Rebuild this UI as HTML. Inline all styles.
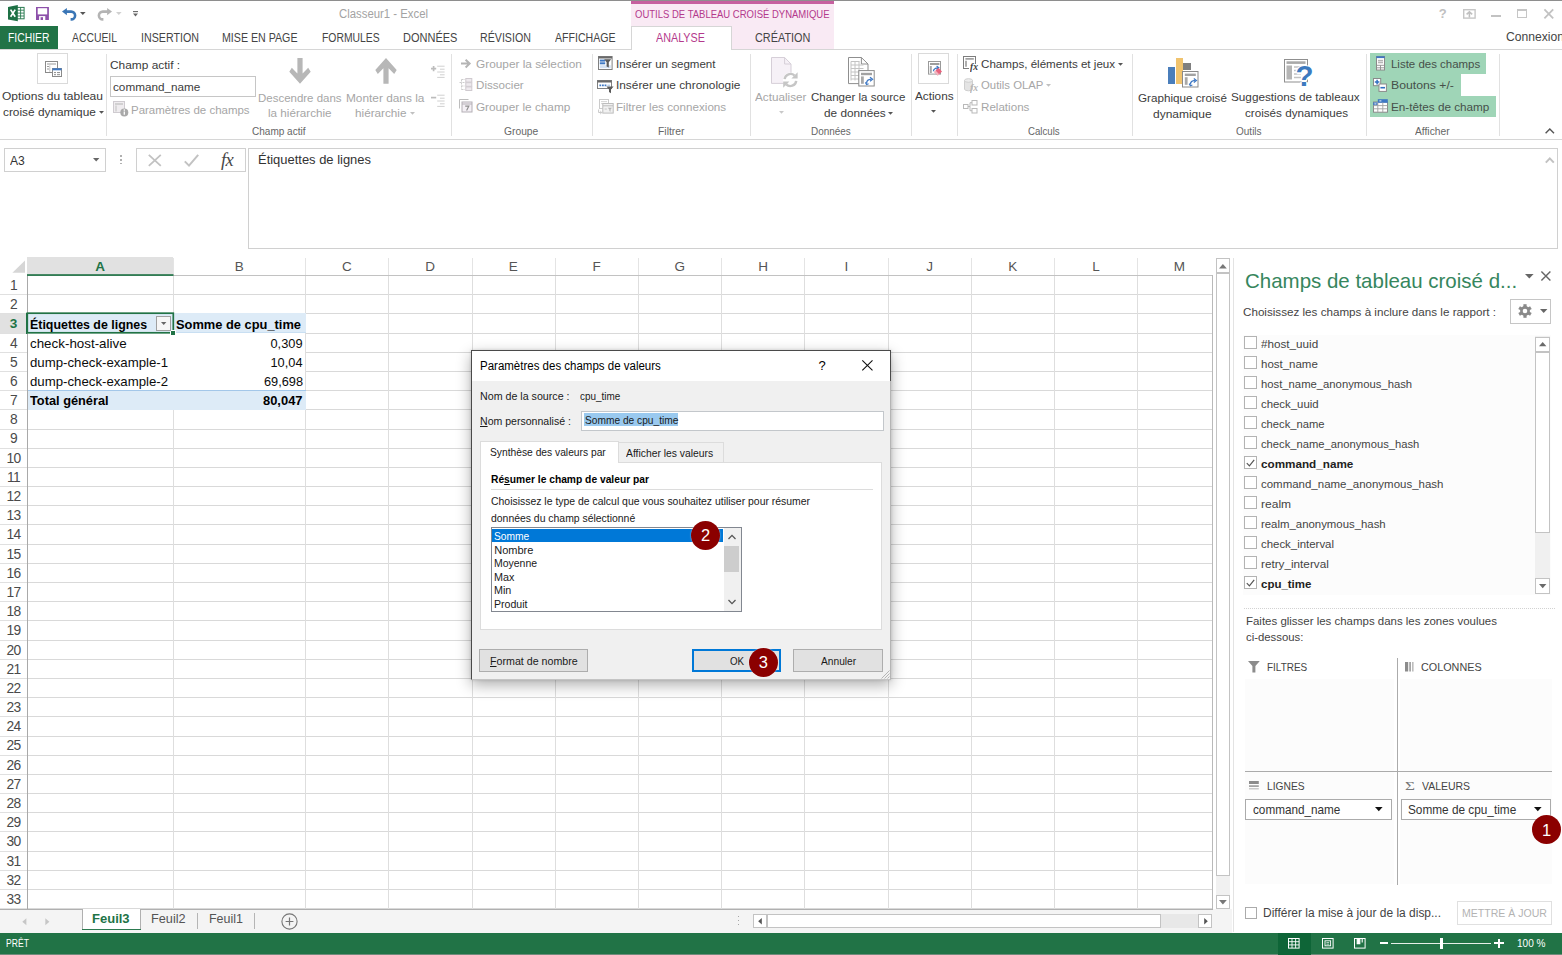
<!DOCTYPE html>
<html lang="fr"><head><meta charset="utf-8"><title>Classeur1 - Excel</title>
<style>
html,body{margin:0;padding:0;}
html{width:1562px;height:955px;overflow:hidden;}
body{width:1562px;height:955px;overflow:hidden;background:#fff;position:relative;font-family:"Liberation Sans",sans-serif;}
.a{position:absolute;box-sizing:border-box;}
.t{white-space:nowrap;}
svg{overflow:visible;}
</style></head>
<body>
<div class="a" style="left:0.00px;top:0.00px;width:1562.00px;height:1.00px;background:#8e8e8e;"></div>
<div class="a" style="left:631.00px;top:1.00px;width:202.50px;height:48.50px;background:#f9eaf4;"></div>
<div class="a" style="left:631.00px;top:1.00px;width:202.50px;height:3.00px;background:#c6609f;"></div>
<span class="a t" style="top:7px;font-size:10.5px;line-height:14px;color:#b4398c;left:635.00px;transform:scaleX(0.9050);transform-origin:0 50%;"><span>OUTILS DE TABLEAU CROISÉ DYNAMIQUE</span></span>
<span class="a t" style="top:6px;font-size:12px;line-height:16px;color:#a3a3a3;left:339.00px;transform:scaleX(0.9465);transform-origin:0 50%;"><span>Classeur1 - Excel</span></span>
<svg class="a" style="left:7.70px;top:5.30px;" width="17" height="17" viewBox="0 0 17 17"><rect x="8.5" y="2.4" width="7.6" height="11.4" fill="#fff" stroke="#2a7b50" stroke-width="1"/>
<path d="M9 5.2h7M9 8.1h7M9 11h7M12.6 2.4v11.4" stroke="#2a7b50" stroke-width="0.9"/>
<path d="M0 1.9 L9.8 0 V16.3 L0 14.4 Z" fill="#1e7145"/>
<path d="M2.6 4.6 L7.2 11.8 M7.2 4.6 L2.6 11.8" stroke="#fff" stroke-width="1.7"/></svg>
<svg class="a" style="left:35.80px;top:7.00px;" width="13" height="13" viewBox="0 0 13 13"><path d="M0 0H12.9V13H0Z" fill="#8d50aa"/><rect x="1.7" y="1.2" width="9.5" height="6.2" fill="#fff"/>
<rect x="3.1" y="9.1" width="6.2" height="3.9" fill="#fff"/><rect x="4.6" y="10.2" width="2.4" height="2.8" fill="#8d50aa"/></svg>
<svg class="a" style="left:61.50px;top:7.90px;" width="15" height="13" viewBox="0 0 15 13"><path d="M4 3.6 H9.2 A3.9 3.9 0 0 1 9.2 11.4 H8.6" fill="none" stroke="#3a76b6" stroke-width="2.6"/>
<path d="M0 3.6 L4.9 0 V7.3 Z" fill="#3a76b6"/></svg>
<svg class="a" style="left:80.20px;top:12.00px;" width="6" height="3" viewBox="0 0 6 3"><path d="M0 0H5.6L2.8 2.9Z" fill="#555"/></svg>
<svg class="a" style="left:97.00px;top:7.90px;" width="15" height="13" viewBox="0 0 15 13"><path d="M11 3.6 H5.8 A3.9 3.9 0 0 0 5.8 11.4 H6.4" fill="none" stroke="#b4b4b4" stroke-width="2.6"/>
<path d="M15 3.6 L10.1 0 V7.3 Z" fill="#b4b4b4"/></svg>
<svg class="a" style="left:116.40px;top:12.00px;" width="6" height="3" viewBox="0 0 6 3"><path d="M0 0H5.6L2.8 2.9Z" fill="#d0d0d0"/></svg>
<svg class="a" style="left:133.00px;top:11.40px;" width="6" height="6" viewBox="0 0 6 6"><path d="M0 0.6H5" stroke="#666" stroke-width="1.1"/><path d="M0 2.5H5L2.5 5.4Z" fill="#666"/></svg>
<span class="a t" style="top:5px;font-size:13px;line-height:17px;color:#c0c0c0;left:1442.70px;transform:translateX(-50%);font-weight:700;"><span>?</span></span>
<svg class="a" style="left:1463.00px;top:8.80px;" width="13" height="10" viewBox="0 0 13 10"><rect x="0.7" y="0.7" width="11.4" height="8.4" fill="none" stroke="#c6c6c6" stroke-width="1.4"/>
<path d="M6.4 8.4V3M3.6 5.4L6.4 2.8L9.2 5.4" fill="none" stroke="#c0c0c0" stroke-width="1.6"/></svg>
<div class="a" style="left:1491.00px;top:14.80px;width:9.80px;height:2.00px;background:#c2c2c2;"></div>
<div class="a" style="left:1517.20px;top:8.90px;width:9.80px;height:9.60px;border:1.4px solid #c6c6c6;border-top-width:2.6px;"></div>
<svg class="a" style="left:1544.00px;top:8.90px;" width="10" height="10" viewBox="0 0 10 10"><path d="M0.4 0.4L9.2 9.3M9.2 0.4L0.4 9.3" stroke="#c2c2c2" stroke-width="1.8"/></svg>
<div class="a" style="left:0.00px;top:26.00px;width:58.00px;height:24.00px;background:#217346;"></div>
<span class="a t" style="top:30px;font-size:12.5px;line-height:16px;color:#fff;left:7.70px;transform:scaleX(0.8300);transform-origin:0 50%;"><span>FICHIER</span></span>
<span class="a t" style="top:30px;font-size:12.5px;line-height:16px;color:#444444;left:72.00px;transform:scaleX(0.8304);transform-origin:0 50%;"><span>ACCUEIL</span></span>
<span class="a t" style="top:30px;font-size:12.5px;line-height:16px;color:#444444;left:140.60px;transform:scaleX(0.8534);transform-origin:0 50%;"><span>INSERTION</span></span>
<span class="a t" style="top:30px;font-size:12.5px;line-height:16px;color:#444444;left:222.30px;transform:scaleX(0.8513);transform-origin:0 50%;"><span>MISE EN PAGE</span></span>
<span class="a t" style="top:30px;font-size:12.5px;line-height:16px;color:#444444;left:321.60px;transform:scaleX(0.8308);transform-origin:0 50%;"><span>FORMULES</span></span>
<span class="a t" style="top:30px;font-size:12.5px;line-height:16px;color:#444444;left:403.00px;transform:scaleX(0.8799);transform-origin:0 50%;"><span>DONNÉES</span></span>
<span class="a t" style="top:30px;font-size:12.5px;line-height:16px;color:#444444;left:480.40px;transform:scaleX(0.8519);transform-origin:0 50%;"><span>RÉVISION</span></span>
<span class="a t" style="top:30px;font-size:12.5px;line-height:16px;color:#444444;left:555.20px;transform:scaleX(0.8470);transform-origin:0 50%;"><span>AFFICHAGE</span></span>
<div class="a" style="left:0.00px;top:49.00px;width:1562.00px;height:1.00px;background:#d6d6d6;"></div>
<div class="a" style="left:630.50px;top:26.20px;width:101.50px;height:24.00px;background:#fff;border:1px solid #d6d6d6;border-bottom:none;"></div>
<span class="a t" style="top:30px;font-size:12.5px;line-height:16px;color:#b4398c;left:655.60px;transform:scaleX(0.8617);transform-origin:0 50%;"><span>ANALYSE</span></span>
<span class="a t" style="top:30px;font-size:12.5px;line-height:16px;color:#444444;left:755.40px;transform:scaleX(0.8701);transform-origin:0 50%;"><span>CRÉATION</span></span>
<div class="a" style="left:1500px;top:26px;width:62px;height:23px;overflow:hidden;"><span class="a t" style="top:3px;font-size:12.5px;line-height:16px;color:#444444;left:6.40px;transform:scaleX(0.9705);transform-origin:0 50%;"><span>Connexion</span></span></div>
<div class="a" style="left:0.00px;top:139.00px;width:1562.00px;height:1.00px;background:#d6d6d6;"></div>
<div class="a" style="left:106.20px;top:54.00px;width:1.00px;height:81.50px;background:#e1e1e1;"></div>
<div class="a" style="left:451.20px;top:54.00px;width:1.00px;height:81.50px;background:#e1e1e1;"></div>
<div class="a" style="left:591.70px;top:54.00px;width:1.00px;height:81.50px;background:#e1e1e1;"></div>
<div class="a" style="left:749.90px;top:54.00px;width:1.00px;height:81.50px;background:#e1e1e1;"></div>
<div class="a" style="left:911.40px;top:54.00px;width:1.00px;height:81.50px;background:#e1e1e1;"></div>
<div class="a" style="left:956.70px;top:54.00px;width:1.00px;height:81.50px;background:#e1e1e1;"></div>
<div class="a" style="left:1132.40px;top:54.00px;width:1.00px;height:81.50px;background:#e1e1e1;"></div>
<div class="a" style="left:1366.30px;top:54.00px;width:1.00px;height:81.50px;background:#e1e1e1;"></div>
<div class="a" style="left:1499.00px;top:54.00px;width:1.00px;height:81.50px;background:#e1e1e1;"></div>
<div class="a" style="left:37.40px;top:53.30px;width:30.40px;height:30.40px;background:#fff;border:1px solid #dadada;"></div>
<svg class="a" style="left:45.00px;top:61.00px;" width="17" height="16" viewBox="0 0 17 16"><rect x="0.5" y="0.5" width="12" height="11" fill="#fff" stroke="#8a8a8a"/>
<path d="M2 3h9M2 5.5h2M2 8h2" stroke="#9a9a9a" stroke-width="1.2"/><path d="M4.8 4.4v6.4" stroke="#b5b5b5" stroke-width="0.8"/>
<rect x="7.5" y="7.5" width="9" height="8" fill="#fff" stroke="#8a8a8a"/><rect x="7.5" y="7.3" width="9" height="2" fill="#3e78c4"/>
<path d="M9 11.6h2M12 11.6h3M9 13.7h2M12 13.7h3" stroke="#8a8a8a" stroke-width="1"/></svg>
<span class="a t" style="top:88px;font-size:11.8px;line-height:16px;color:#3a3a3a;left:2.30px;transform:scaleX(1.0197);transform-origin:0 50%;"><span>Options du tableau</span></span>
<span class="a t" style="top:104px;font-size:11.8px;line-height:16px;color:#3a3a3a;left:2.50px;transform:scaleX(1.0047);transform-origin:0 50%;"><span>croisé dynamique</span></span>
<svg class="a" style="left:98.60px;top:110.60px;" width="6" height="4" viewBox="0 0 6 4"><path d="M0 0H5L2.5 2.8Z" fill="#555"/></svg>
<span class="a t" style="top:57px;font-size:11.8px;line-height:16px;color:#3a3a3a;left:110.00px;transform:scaleX(1.0086);transform-origin:0 50%;"><span>Champ actif :</span></span>
<div class="a" style="left:110.00px;top:76.00px;width:146.00px;height:21.40px;background:#fff;border:1px solid #c6c6c6;"></div>
<span class="a t" style="top:79px;font-size:11.8px;line-height:16px;color:#3c3c3c;left:112.90px;transform:scaleX(0.9946);transform-origin:0 50%;"><span>command_name</span></span>
<svg class="a" style="left:113.00px;top:100.50px;" width="16" height="16" viewBox="0 0 16 16"><rect x="0.5" y="0.5" width="11" height="11" fill="#efecef" stroke="#cfcbd0"/>
<path d="M2 3h8" stroke="#c4c4c4" stroke-width="1.4"/><path d="M3 4.5v6" stroke="#cdcdcd" stroke-width="1.4"/>
<circle cx="11.3" cy="11.5" r="4" fill="#a9a9a9"/><path d="M11.3 10.6v3.2" stroke="#fff" stroke-width="1.3"/><circle cx="11.3" cy="9.1" r="0.8" fill="#fff"/></svg>
<span class="a t" style="top:102px;font-size:11.8px;line-height:16px;color:#a6a6a6;left:131.40px;transform:scaleX(0.9724);transform-origin:0 50%;"><span>Paramètres de champs</span></span>
<svg class="a" style="left:288.80px;top:58.00px;" width="22" height="26" viewBox="0 0 22 26"><path d="M8.4 0H13.6V15.5L19.2 9.7L21.7 13.8L11 25.8L0.3 13.8L2.8 9.7L8.4 15.5Z" fill="#b7b7b7"/></svg>
<svg class="a" style="left:374.50px;top:58.00px;" width="22" height="26" viewBox="0 0 22 26"><path d="M8.4 25.8H13.6V10.3L19.2 16.1L21.7 12L11 0L0.3 12L2.8 16.1L8.4 10.3Z" fill="#b7b7b7"/></svg>
<span class="a t" style="top:90px;font-size:11.8px;line-height:16px;color:#a6a6a6;left:257.80px;transform:scaleX(0.9730);transform-origin:0 50%;"><span>Descendre dans</span></span>
<span class="a t" style="top:105px;font-size:11.8px;line-height:16px;color:#a6a6a6;left:267.50px;transform:scaleX(0.9896);transform-origin:0 50%;"><span>la hiérarchie</span></span>
<span class="a t" style="top:90px;font-size:11.8px;line-height:16px;color:#a6a6a6;left:345.90px;transform:scaleX(1.0045);transform-origin:0 50%;"><span>Monter dans la</span></span>
<span class="a t" style="top:105px;font-size:11.8px;line-height:16px;color:#a6a6a6;left:355.30px;transform:scaleX(0.9940);transform-origin:0 50%;"><span>hiérarchie</span></span>
<svg class="a" style="left:410.00px;top:112.20px;" width="6" height="4" viewBox="0 0 6 4"><path d="M0 0H5L2.5 2.8Z" fill="#c0c0c0"/></svg>
<svg class="a" style="left:431.00px;top:64.60px;" width="14" height="13" viewBox="0 0 14 13"><path d="M0 3.6h5.2M2.6 1v5.2" stroke="#bcbcbc" stroke-width="1.7"/><path d="M6.2 1.2h7.4M9 4.2h4.6M6.2 7h7.4M9 9.8h4.6M6.2 12.4h7.4" stroke="#d0d0d0" stroke-width="1"/></svg>
<svg class="a" style="left:431.00px;top:94.40px;" width="14" height="13" viewBox="0 0 14 13"><path d="M0 3.6h5.2" stroke="#bcbcbc" stroke-width="1.7"/><path d="M6.2 1.2h7.4M9 4.2h4.6M6.2 7h7.4M9 9.8h4.6M6.2 12.4h7.4" stroke="#d0d0d0" stroke-width="1"/></svg>
<span class="a t" style="top:124px;font-size:10.8px;line-height:14px;color:#666;left:251.80px;transform:scaleX(0.9287);transform-origin:0 50%;"><span>Champ actif</span></span>
<svg class="a" style="left:460.60px;top:59.00px;" width="10" height="10" viewBox="0 0 10 10"><path d="M0 4.6H7M4.6 0.8L8.6 4.6L4.6 8.4" fill="none" stroke="#b4b4b4" stroke-width="2"/></svg>
<span class="a t" style="top:56px;font-size:11.8px;line-height:16px;color:#a6a6a6;left:475.90px;transform:scaleX(1.0030);transform-origin:0 50%;"><span>Grouper la sélection</span></span>
<svg class="a" style="left:458.80px;top:78.00px;" width="14" height="13" viewBox="0 0 14 13"><path d="M2.5 1.5h3.5M0.5 4.5h5.5M2.5 8h3.5M2.5 11.5h3.5M2.5 1.5v10" fill="none" stroke="#cdcdcd" stroke-dasharray="2 1"/>
<rect x="6.8" y="0.5" width="6" height="3.6" fill="#eeeaee" stroke="#cfcacf"/><rect x="6.8" y="4.7" width="6" height="3.6" fill="#eeeaee" stroke="#cfcacf"/><rect x="6.8" y="8.9" width="6" height="3.6" fill="#eeeaee" stroke="#cfcacf"/></svg>
<span class="a t" style="top:77px;font-size:11.8px;line-height:16px;color:#a6a6a6;left:475.90px;transform:scaleX(0.9832);transform-origin:0 50%;"><span>Dissocier</span></span>
<svg class="a" style="left:458.80px;top:99.00px;" width="14" height="14" viewBox="0 0 14 14"><path d="M0.5 9.5V0.5H9.5" fill="none" stroke="#bdbdbd"/><rect x="3" y="3" width="10" height="10" fill="#f4f0f5" stroke="#b4afb5"/><path d="M3 5h10" stroke="#b4afb5"/>
<path d="M6.2 7.2h3.6L7.6 11.6" fill="none" stroke="#8f8f8f" stroke-width="1.2"/></svg>
<span class="a t" style="top:99px;font-size:11.8px;line-height:16px;color:#a6a6a6;left:475.90px;"><span>Grouper le champ</span></span>
<span class="a t" style="top:124px;font-size:10.8px;line-height:14px;color:#666;left:504.30px;transform:scaleX(0.9524);transform-origin:0 50%;"><span>Groupe</span></span>
<svg class="a" style="left:598.20px;top:56.00px;" width="15" height="14" viewBox="0 0 15 14"><rect x="0.5" y="0.5" width="13.6" height="13" fill="#fff" stroke="#808080"/><rect x="0.5" y="0.5" width="13.6" height="2" fill="#6a6a6a"/>
<rect x="1.8" y="9.2" width="11" height="3" fill="#d3e2f4"/>
<rect x="1.8" y="3.6" width="5.4" height="2" fill="#3e78c4"/><rect x="1.8" y="6.3" width="5.4" height="2" fill="#3e78c4"/>
<path d="M6.2 3.2H13.2L10.8 6.2V11.6L8.6 10.4V6.2Z" fill="#5a5a5a"/></svg>
<span class="a t" style="top:56px;font-size:11.8px;line-height:16px;color:#3c3c3c;left:616.00px;transform:scaleX(0.9789);transform-origin:0 50%;"><span>Insérer un segment</span></span>
<svg class="a" style="left:597.00px;top:80.00px;" width="17" height="14" viewBox="0 0 17 14"><rect x="0.5" y="0.5" width="14" height="8" fill="#fff" stroke="#808080"/><rect x="0.5" y="0.5" width="14" height="2" fill="#6a6a6a"/>
<path d="M2.4 5.4h1.8M5 5.4h1.8M7.6 5.4h1.8" stroke="#3e78c4" stroke-width="1.6"/><path d="M10.4 5.4h2.6" stroke="#b9cfea" stroke-width="1.6"/>
<path d="M9.4 6.4H16.6L14 9.4V13.2L12 12V9.4Z" fill="#5a5a5a"/></svg>
<span class="a t" style="top:77px;font-size:11.8px;line-height:16px;color:#3c3c3c;left:616.00px;transform:scaleX(1.0036);transform-origin:0 50%;"><span>Insérer une chronologie</span></span>
<svg class="a" style="left:597.50px;top:99.00px;" width="16" height="16" viewBox="0 0 16 16"><rect x="1.5" y="0.5" width="9" height="9" fill="#fff" stroke="#cbcbcb"/><path d="M3 2.6h6M3 4.6h6" stroke="#d6d6d6"/>
<rect x="4.8" y="4.5" width="10.4" height="9.6" fill="#f1f1f1" stroke="#bdbdbd"/><path d="M5 6.8h10" stroke="#bdbdbd"/>
<path d="M6.6 10h2.2" stroke="#c4c4c4"/><path d="M9.8 8.8H14L12.5 10.6v2.2l-1.1-.7v-1.5Z" fill="#b5b5b5"/><path d="M0.6 10.5v3h3M2.2 12l1.6 1.5-1.6 1.5" fill="none" stroke="#c8c8c8"/></svg>
<span class="a t" style="top:99px;font-size:11.8px;line-height:16px;color:#a6a6a6;left:616.00px;transform:scaleX(0.9886);transform-origin:0 50%;"><span>Filtrer les connexions</span></span>
<span class="a t" style="top:124px;font-size:10.8px;line-height:14px;color:#666;left:657.50px;transform:scaleX(0.9604);transform-origin:0 50%;"><span>Filtrer</span></span>
<svg class="a" style="left:770.80px;top:56.70px;" width="28" height="31" viewBox="0 0 28 31"><path d="M0.5 0.5H13.6L20 7V26.4H0.5Z" fill="#f6f1f7" stroke="#d6cfd8"/><path d="M13.6 0.5V7H20" fill="none" stroke="#d6cfd8"/>
<circle cx="19.4" cy="23" r="7.6" fill="#fff"/>
<path d="M13.6 22.2A5.9 5.9 0 0 1 23.6 18.6" fill="none" stroke="#c6c6c6" stroke-width="2.4"/><path d="M26.6 15.2V21.4H20.4Z" fill="#c6c6c6"/>
<path d="M25.2 23.8A5.9 5.9 0 0 1 15.2 27.4" fill="none" stroke="#c6c6c6" stroke-width="2.4"/><path d="M12.2 30.8V24.6H18.4Z" fill="#c6c6c6"/></svg>
<span class="a t" style="top:89px;font-size:11.8px;line-height:16px;color:#a6a6a6;left:755.30px;transform:scaleX(0.9923);transform-origin:0 50%;"><span>Actualiser</span></span>
<svg class="a" style="left:778.50px;top:110.80px;" width="6" height="4" viewBox="0 0 6 4"><path d="M0 0H5L2.5 2.8Z" fill="#c8c8c8"/></svg>
<svg class="a" style="left:847.90px;top:57.40px;" width="27" height="30" viewBox="0 0 27 30"><path d="M0.5 0.5H13.4L20 7V26.6H0.5Z" fill="#fff" stroke="#8f8f8f"/><path d="M13.4 0.5V7H20" fill="none" stroke="#8f8f8f"/>
<path d="M3 4.5h8.5M3 8h12.5M3 11.5h12.5M3 15h12.5M3 18.5h12.5M3 22h12.5M3 4.5v19M7 4.5v19M11 4.5v19" stroke="#c4c4c4" stroke-width="1"/>
<rect x="10.8" y="13.6" width="15.4" height="15.4" fill="#fff" stroke="#8a8a8a"/><path d="M13 17h11" stroke="#a2a2a2" stroke-width="2.4"/><path d="M14.4 19.4v7.4" stroke="#a8a8a8" stroke-width="2.8"/>
<path d="M18.6 26.4C18.6 23.6 20 22.4 23.4 22.2" fill="none" stroke="#3e78c4" stroke-width="1.3"/><path d="M22 20.2L24.6 22.2L22 24.2M20.6 26.8L18.6 27.6L17.4 25.4" fill="none" stroke="#3e78c4" stroke-width="1.2"/></svg>
<span class="a t" style="top:89px;font-size:11.8px;line-height:16px;color:#3c3c3c;left:810.70px;transform:scaleX(0.9782);transform-origin:0 50%;"><span>Changer la source</span></span>
<span class="a t" style="top:105px;font-size:11.8px;line-height:16px;color:#3c3c3c;left:824.00px;"><span>de données</span></span>
<svg class="a" style="left:888.40px;top:112.40px;" width="6" height="4" viewBox="0 0 6 4"><path d="M0 0H5L2.5 2.8Z" fill="#555"/></svg>
<span class="a t" style="top:124px;font-size:10.8px;line-height:14px;color:#666;left:810.70px;transform:scaleX(0.9206);transform-origin:0 50%;"><span>Données</span></span>
<div class="a" style="left:918.00px;top:53.40px;width:30.80px;height:30.30px;background:#fff;border:1px solid #dadada;"></div>
<svg class="a" style="left:928.00px;top:61.20px;" width="16" height="16" viewBox="0 0 16 16"><rect x="0.5" y="0.5" width="12" height="12.6" fill="#fff" stroke="#9a9a9a"/><path d="M2 3h9.4" stroke="#9e9e9e" stroke-width="2"/><path d="M2.8 5v7" stroke="#a8a8a8" stroke-width="2"/>
<path d="M5.4 10.2C5.6 8 7 7 10 6.8M8.6 5L10.8 6.8L8.6 8.6" fill="none" stroke="#3e78c4" stroke-width="1.2"/>
<path d="M6.2 11L10.4 6.8L14 10.4L9.8 14.6Z" fill="#e8637d"/><path d="M6.2 11L7.6 9.6L11.2 13.2L9.8 14.6Z" fill="#f3b4c0"/></svg>
<span class="a t" style="top:88px;font-size:11.8px;line-height:16px;color:#3c3c3c;left:914.50px;transform:scaleX(0.9977);transform-origin:0 50%;"><span>Actions</span></span>
<svg class="a" style="left:931.40px;top:109.60px;" width="6" height="4" viewBox="0 0 6 4"><path d="M0 0H5L2.5 2.8Z" fill="#555"/></svg>
<svg class="a" style="left:963.00px;top:55.80px;" width="16" height="16" viewBox="0 0 16 16"><rect x="0.5" y="0.5" width="12" height="12" fill="#fff" stroke="#7d7d7d"/><path d="M2.4 2.9h8.4" stroke="#8a8a8a" stroke-width="1.4"/><path d="M3 4.8v6" stroke="#9a9a9a" stroke-width="1.6"/></svg>
<div class="a" style="left:969.00px;top:63.50px;width:9.50px;height:9.00px;background:#fff;"></div>
<span class="a t" style="top:60px;font-size:10.5px;line-height:14px;color:#3c3c3c;left:969.60px;font-weight:700;font-family:'Liberation Serif', serif;font-style:italic;transform:scaleX(0.9143);transform-origin:0 50%;"><span>fx</span></span>
<span class="a t" style="top:56px;font-size:11.8px;line-height:16px;color:#3c3c3c;left:980.70px;transform:scaleX(0.9832);transform-origin:0 50%;"><span>Champs, éléments et jeux</span></span>
<svg class="a" style="left:1118.00px;top:62.60px;" width="6" height="4" viewBox="0 0 6 4"><path d="M0 0H5L2.5 2.8Z" fill="#555"/></svg>
<svg class="a" style="left:964.00px;top:77.50px;" width="14" height="15" viewBox="0 0 14 15"><path d="M0.5 2.5V11A4 1.8 0 0 0 8.5 11V2.5" fill="#e4e4e4" stroke="#cfcfcf"/><ellipse cx="4.5" cy="2.5" rx="4" ry="1.8" fill="#ededed" stroke="#cfcfcf"/></svg>
<span class="a t" style="top:81px;font-size:10.5px;line-height:14px;color:#b5b5b5;left:970.00px;font-weight:700;font-family:'Liberation Serif', serif;font-style:italic;transform:scaleX(0.9143);transform-origin:0 50%;"><span>fx</span></span>
<span class="a t" style="top:77px;font-size:11.8px;line-height:16px;color:#a6a6a6;left:980.70px;transform:scaleX(0.9614);transform-origin:0 50%;"><span>Outils OLAP</span></span>
<svg class="a" style="left:1046.00px;top:84.00px;" width="6" height="4" viewBox="0 0 6 4"><path d="M0 0H5L2.5 2.8Z" fill="#c0c0c0"/></svg>
<svg class="a" style="left:963.00px;top:99.50px;" width="15" height="14" viewBox="0 0 15 14"><rect x="0.5" y="4.5" width="4.5" height="4" fill="#fff" stroke="#b9b9b9"/><rect x="9" y="0.5" width="5" height="4.5" fill="#fff" stroke="#b9b9b9"/><rect x="9" y="8.5" width="5" height="4.5" fill="#fff" stroke="#b9b9b9"/>
<path d="M5 6.5h2V2.7h2M7 6.5v4.2h2" fill="none" stroke="#b9b9b9"/></svg>
<span class="a t" style="top:99px;font-size:11.8px;line-height:16px;color:#a6a6a6;left:980.70px;transform:scaleX(0.9840);transform-origin:0 50%;"><span>Relations</span></span>
<span class="a t" style="top:124px;font-size:10.8px;line-height:14px;color:#666;left:1027.80px;transform:scaleX(0.8953);transform-origin:0 50%;"><span>Calculs</span></span>
<div class="a" style="left:1167.60px;top:66.60px;width:7.60px;height:17.40px;background:#4a7ebb;"></div>
<div class="a" style="left:1175.50px;top:58.00px;width:7.60px;height:26.00px;background:#f0c36e;"></div>
<div class="a" style="left:1183.40px;top:63.40px;width:7.40px;height:7.00px;background:#7f7f7f;"></div>
<svg class="a" style="left:1182.20px;top:70.80px;" width="16.5" height="16.5" viewBox="0 0 16.5 16.5"><rect x="0.5" y="0.5" width="15.5" height="15.5" fill="#fff" stroke="#8a8a8a"/><path d="M2.8 3.8h11" stroke="#a2a2a2" stroke-width="2.4"/><path d="M4.2 6.2v7.6" stroke="#a8a8a8" stroke-width="2.8"/>
<path d="M8.4 13.6C8.4 10.8 9.8 9.6 13.2 9.4" fill="none" stroke="#3e78c4" stroke-width="1.3"/><path d="M11.8 7.4L14.4 9.4L11.8 11.4M10.4 14L8.4 14.8L7.2 12.6" fill="none" stroke="#3e78c4" stroke-width="1.2"/></svg>
<span class="a t" style="top:90px;font-size:11.8px;line-height:16px;color:#3c3c3c;left:1137.60px;transform:scaleX(0.9895);transform-origin:0 50%;"><span>Graphique croisé</span></span>
<span class="a t" style="top:106px;font-size:11.8px;line-height:16px;color:#3c3c3c;left:1153.00px;transform:scaleX(1.0153);transform-origin:0 50%;"><span>dynamique</span></span>
<svg class="a" style="left:1283.50px;top:59.00px;" width="30" height="29" viewBox="0 0 30 29"><rect x="0.5" y="0.5" width="23" height="22.5" fill="#fff" stroke="#8f8f8f"/><path d="M2.5 3.6h19" stroke="#a9a9a9" stroke-width="2.6"/>
<rect x="2.5" y="6.5" width="5.5" height="14" fill="#b5b5b5"/><path d="M10 8h11.5M10 11.5h8M10 15h7M10 18.5h7" stroke="#c2c2c2" stroke-width="1.6"/></svg>
<span class="a t" style="top:58px;font-size:29.5px;line-height:35px;color:#3d7abf;left:1304.40px;transform:translateX(-50%);font-weight:700;text-shadow:-1.5px 0 #fff,1.5px 0 #fff,0 -1.5px #fff,0 1.5px #fff;"><span>?</span></span>
<span class="a t" style="top:89px;font-size:11.8px;line-height:16px;color:#3c3c3c;left:1231.40px;transform:scaleX(0.9960);transform-origin:0 50%;"><span>Suggestions de tableaux</span></span>
<span class="a t" style="top:105px;font-size:11.8px;line-height:16px;color:#3c3c3c;left:1244.70px;transform:scaleX(0.9879);transform-origin:0 50%;"><span>croisés dynamiques</span></span>
<span class="a t" style="top:124px;font-size:10.8px;line-height:14px;color:#666;left:1236.00px;transform:scaleX(0.9272);transform-origin:0 50%;"><span>Outils</span></span>
<div class="a" style="left:1370.20px;top:53.20px;width:115.80px;height:21.00px;background:#9fd5b7;"></div>
<div class="a" style="left:1370.20px;top:74.00px;width:91.00px;height:22.00px;background:#9fd5b7;"></div>
<div class="a" style="left:1370.20px;top:95.90px;width:126.00px;height:21.20px;background:#9fd5b7;"></div>
<svg class="a" style="left:1375.80px;top:56.00px;" width="10" height="15" viewBox="0 0 10 15"><rect x="0.5" y="0.5" width="8" height="13.5" fill="#fff" stroke="#8a8a8a"/><rect x="0.3" y="0.3" width="8.4" height="1.8" fill="#3e78c4"/>
<rect x="1.8" y="3.4" width="5.4" height="4.6" fill="#e9e9e9"/><path d="M2 4.6h5M2 6.4h5" stroke="#a8a8a8" stroke-width="0.9"/><path d="M0.5 9.3h8M0.5 11.8h8M4.5 9.3v4.7" stroke="#8f8f8f" stroke-width="0.9"/></svg>
<svg class="a" style="left:1373.30px;top:77.60px;" width="15" height="14" viewBox="0 0 15 14"><rect x="0.5" y="0.5" width="7.2" height="7.2" fill="#fff" stroke="#8a8a8a"/><path d="M1.8 4.1h4.6M4.1 1.8v4.6" stroke="#2f6fc0" stroke-width="1.5"/>
<rect x="6" y="6" width="7.4" height="7.4" fill="#fff" stroke="#8a8a8a"/><path d="M7.4 9.7h4.6" stroke="#2f6fc0" stroke-width="1.6"/></svg>
<svg class="a" style="left:1373.00px;top:99.00px;" width="15" height="14" viewBox="0 0 15 14"><rect x="0.5" y="3" width="14" height="10.2" fill="#fff" stroke="#8a8a8a"/><rect x="4.8" y="0.2" width="10" height="3.6" fill="#3e78c4"/><rect x="0.2" y="3.4" width="4.6" height="3" fill="#3e78c4"/>
<path d="M0.5 6.6h14M0.5 9.8h14M4.8 3.6v9.6M9.8 3.6v9.6" stroke="#a0a0a0" stroke-width="0.9"/><path d="M6.4 1.9h2M1.4 4.9h2" stroke="#fff" stroke-width="0.9"/></svg>
<span class="a t" style="top:56px;font-size:11.8px;line-height:16px;color:#46504a;left:1391.40px;transform:scaleX(0.9715);transform-origin:0 50%;"><span>Liste des champs</span></span>
<span class="a t" style="top:77px;font-size:11.8px;line-height:16px;color:#46504a;left:1391.40px;transform:scaleX(1.0367);transform-origin:0 50%;"><span>Boutons +/-</span></span>
<span class="a t" style="top:99px;font-size:11.8px;line-height:16px;color:#46504a;left:1391.40px;transform:scaleX(0.9936);transform-origin:0 50%;"><span>En-têtes de champ</span></span>
<span class="a t" style="top:124px;font-size:10.8px;line-height:14px;color:#666;left:1415.30px;transform:scaleX(0.9500);transform-origin:0 50%;"><span>Afficher</span></span>
<svg class="a" style="left:1544.50px;top:127.50px;" width="10" height="6" viewBox="0 0 10 6"><path d="M0.6 5.2L4.8 1L9 5.2" fill="none" stroke="#555" stroke-width="1.4"/></svg>
<div class="a" style="left:4.00px;top:148.00px;width:102.00px;height:23.50px;background:#fff;border:1px solid #d0d0d0;"></div>
<span class="a t" style="top:152px;font-size:13px;line-height:17px;color:#333;left:9.70px;transform:scaleX(0.9305);transform-origin:0 50%;"><span>A3</span></span>
<svg class="a" style="left:93.20px;top:158.30px;" width="7" height="4" viewBox="0 0 7 4"><path d="M0 0H6.4L3.2 3.5Z" fill="#666"/></svg>
<div class="a" style="left:120.00px;top:155.20px;width:1.50px;height:1.50px;background:#b0b0b0;"></div>
<div class="a" style="left:120.00px;top:159.00px;width:1.50px;height:1.50px;background:#b0b0b0;"></div>
<div class="a" style="left:120.00px;top:162.80px;width:1.50px;height:1.50px;background:#b0b0b0;"></div>
<div class="a" style="left:136.00px;top:148.00px;width:109.50px;height:23.50px;background:#fff;border:1px solid #d0d0d0;"></div>
<svg class="a" style="left:148.00px;top:154.00px;" width="14" height="13" viewBox="0 0 14 13"><path d="M0.8 0.8L12.8 11.8M12.8 0.8L0.8 11.8" stroke="#c2c2c2" stroke-width="1.8"/></svg>
<svg class="a" style="left:184.00px;top:154.00px;" width="15" height="13" viewBox="0 0 15 13"><path d="M0.8 7.4L5 11.6L14.2 0.8" fill="none" stroke="#c2c2c2" stroke-width="2"/></svg>
<span class="a t" style="top:149px;font-size:18.5px;line-height:23px;color:#484848;left:227.00px;transform:translateX(-50%);font-family:'Liberation Serif', serif;font-style:italic;letter-spacing:-0.6px;"><span>fx</span></span>
<div class="a" style="left:248.00px;top:148.00px;width:1310.00px;height:100.50px;background:#fff;border:1px solid #d0d0d0;"></div>
<span class="a t" style="top:152px;font-size:12.3px;line-height:16px;color:#333;left:258.00px;transform:scaleX(1.0528);transform-origin:0 50%;"><span>Étiquettes de lignes</span></span>
<svg class="a" style="left:1545.30px;top:157.00px;" width="10" height="7" viewBox="0 0 10 7"><path d="M0.8 5.6L4.8 1.4L8.8 5.6" fill="none" stroke="#c2c2c2" stroke-width="2"/></svg>
<div class="a" style="left:0.00px;top:275.00px;width:27.00px;height:1.00px;background:#e0e0e0;"></div>
<div class="a" style="left:27.00px;top:275.00px;width:1185.50px;height:1.00px;background:#d9d9d9;"></div>
<div class="a" style="left:0.00px;top:294.19px;width:27.00px;height:1.00px;background:#e0e0e0;"></div>
<div class="a" style="left:27.00px;top:294.19px;width:1185.50px;height:1.00px;background:#d9d9d9;"></div>
<div class="a" style="left:0.00px;top:313.38px;width:27.00px;height:1.00px;background:#e0e0e0;"></div>
<div class="a" style="left:27.00px;top:313.38px;width:1185.50px;height:1.00px;background:#d9d9d9;"></div>
<div class="a" style="left:0.00px;top:332.56px;width:27.00px;height:1.00px;background:#e0e0e0;"></div>
<div class="a" style="left:27.00px;top:332.56px;width:1185.50px;height:1.00px;background:#d9d9d9;"></div>
<div class="a" style="left:0.00px;top:351.75px;width:27.00px;height:1.00px;background:#e0e0e0;"></div>
<div class="a" style="left:27.00px;top:351.75px;width:1185.50px;height:1.00px;background:#d9d9d9;"></div>
<div class="a" style="left:0.00px;top:370.94px;width:27.00px;height:1.00px;background:#e0e0e0;"></div>
<div class="a" style="left:27.00px;top:370.94px;width:1185.50px;height:1.00px;background:#d9d9d9;"></div>
<div class="a" style="left:0.00px;top:390.12px;width:27.00px;height:1.00px;background:#e0e0e0;"></div>
<div class="a" style="left:27.00px;top:390.12px;width:1185.50px;height:1.00px;background:#d9d9d9;"></div>
<div class="a" style="left:0.00px;top:409.31px;width:27.00px;height:1.00px;background:#e0e0e0;"></div>
<div class="a" style="left:27.00px;top:409.31px;width:1185.50px;height:1.00px;background:#d9d9d9;"></div>
<div class="a" style="left:0.00px;top:428.50px;width:27.00px;height:1.00px;background:#e0e0e0;"></div>
<div class="a" style="left:27.00px;top:428.50px;width:1185.50px;height:1.00px;background:#d9d9d9;"></div>
<div class="a" style="left:0.00px;top:447.69px;width:27.00px;height:1.00px;background:#e0e0e0;"></div>
<div class="a" style="left:27.00px;top:447.69px;width:1185.50px;height:1.00px;background:#d9d9d9;"></div>
<div class="a" style="left:0.00px;top:466.88px;width:27.00px;height:1.00px;background:#e0e0e0;"></div>
<div class="a" style="left:27.00px;top:466.88px;width:1185.50px;height:1.00px;background:#d9d9d9;"></div>
<div class="a" style="left:0.00px;top:486.06px;width:27.00px;height:1.00px;background:#e0e0e0;"></div>
<div class="a" style="left:27.00px;top:486.06px;width:1185.50px;height:1.00px;background:#d9d9d9;"></div>
<div class="a" style="left:0.00px;top:505.25px;width:27.00px;height:1.00px;background:#e0e0e0;"></div>
<div class="a" style="left:27.00px;top:505.25px;width:1185.50px;height:1.00px;background:#d9d9d9;"></div>
<div class="a" style="left:0.00px;top:524.44px;width:27.00px;height:1.00px;background:#e0e0e0;"></div>
<div class="a" style="left:27.00px;top:524.44px;width:1185.50px;height:1.00px;background:#d9d9d9;"></div>
<div class="a" style="left:0.00px;top:543.62px;width:27.00px;height:1.00px;background:#e0e0e0;"></div>
<div class="a" style="left:27.00px;top:543.62px;width:1185.50px;height:1.00px;background:#d9d9d9;"></div>
<div class="a" style="left:0.00px;top:562.81px;width:27.00px;height:1.00px;background:#e0e0e0;"></div>
<div class="a" style="left:27.00px;top:562.81px;width:1185.50px;height:1.00px;background:#d9d9d9;"></div>
<div class="a" style="left:0.00px;top:582.00px;width:27.00px;height:1.00px;background:#e0e0e0;"></div>
<div class="a" style="left:27.00px;top:582.00px;width:1185.50px;height:1.00px;background:#d9d9d9;"></div>
<div class="a" style="left:0.00px;top:601.19px;width:27.00px;height:1.00px;background:#e0e0e0;"></div>
<div class="a" style="left:27.00px;top:601.19px;width:1185.50px;height:1.00px;background:#d9d9d9;"></div>
<div class="a" style="left:0.00px;top:620.38px;width:27.00px;height:1.00px;background:#e0e0e0;"></div>
<div class="a" style="left:27.00px;top:620.38px;width:1185.50px;height:1.00px;background:#d9d9d9;"></div>
<div class="a" style="left:0.00px;top:639.56px;width:27.00px;height:1.00px;background:#e0e0e0;"></div>
<div class="a" style="left:27.00px;top:639.56px;width:1185.50px;height:1.00px;background:#d9d9d9;"></div>
<div class="a" style="left:0.00px;top:658.75px;width:27.00px;height:1.00px;background:#e0e0e0;"></div>
<div class="a" style="left:27.00px;top:658.75px;width:1185.50px;height:1.00px;background:#d9d9d9;"></div>
<div class="a" style="left:0.00px;top:677.94px;width:27.00px;height:1.00px;background:#e0e0e0;"></div>
<div class="a" style="left:27.00px;top:677.94px;width:1185.50px;height:1.00px;background:#d9d9d9;"></div>
<div class="a" style="left:0.00px;top:697.12px;width:27.00px;height:1.00px;background:#e0e0e0;"></div>
<div class="a" style="left:27.00px;top:697.12px;width:1185.50px;height:1.00px;background:#d9d9d9;"></div>
<div class="a" style="left:0.00px;top:716.31px;width:27.00px;height:1.00px;background:#e0e0e0;"></div>
<div class="a" style="left:27.00px;top:716.31px;width:1185.50px;height:1.00px;background:#d9d9d9;"></div>
<div class="a" style="left:0.00px;top:735.50px;width:27.00px;height:1.00px;background:#e0e0e0;"></div>
<div class="a" style="left:27.00px;top:735.50px;width:1185.50px;height:1.00px;background:#d9d9d9;"></div>
<div class="a" style="left:0.00px;top:754.69px;width:27.00px;height:1.00px;background:#e0e0e0;"></div>
<div class="a" style="left:27.00px;top:754.69px;width:1185.50px;height:1.00px;background:#d9d9d9;"></div>
<div class="a" style="left:0.00px;top:773.88px;width:27.00px;height:1.00px;background:#e0e0e0;"></div>
<div class="a" style="left:27.00px;top:773.88px;width:1185.50px;height:1.00px;background:#d9d9d9;"></div>
<div class="a" style="left:0.00px;top:793.06px;width:27.00px;height:1.00px;background:#e0e0e0;"></div>
<div class="a" style="left:27.00px;top:793.06px;width:1185.50px;height:1.00px;background:#d9d9d9;"></div>
<div class="a" style="left:0.00px;top:812.25px;width:27.00px;height:1.00px;background:#e0e0e0;"></div>
<div class="a" style="left:27.00px;top:812.25px;width:1185.50px;height:1.00px;background:#d9d9d9;"></div>
<div class="a" style="left:0.00px;top:831.44px;width:27.00px;height:1.00px;background:#e0e0e0;"></div>
<div class="a" style="left:27.00px;top:831.44px;width:1185.50px;height:1.00px;background:#d9d9d9;"></div>
<div class="a" style="left:0.00px;top:850.62px;width:27.00px;height:1.00px;background:#e0e0e0;"></div>
<div class="a" style="left:27.00px;top:850.62px;width:1185.50px;height:1.00px;background:#d9d9d9;"></div>
<div class="a" style="left:0.00px;top:869.81px;width:27.00px;height:1.00px;background:#e0e0e0;"></div>
<div class="a" style="left:27.00px;top:869.81px;width:1185.50px;height:1.00px;background:#d9d9d9;"></div>
<div class="a" style="left:0.00px;top:889.00px;width:27.00px;height:1.00px;background:#e0e0e0;"></div>
<div class="a" style="left:27.00px;top:889.00px;width:1185.50px;height:1.00px;background:#d9d9d9;"></div>
<div class="a" style="left:0.00px;top:908.19px;width:27.00px;height:1.00px;background:#e0e0e0;"></div>
<div class="a" style="left:27.00px;top:908.19px;width:1185.50px;height:1.00px;background:#d9d9d9;"></div>
<div class="a" style="left:27.00px;top:275.50px;width:1.00px;height:633.50px;background:#dedede;"></div>
<div class="a" style="left:27.00px;top:258.00px;width:1.00px;height:17.50px;background:#e4e4e4;"></div>
<div class="a" style="left:172.80px;top:275.50px;width:1.00px;height:633.50px;background:#dedede;"></div>
<div class="a" style="left:172.80px;top:258.00px;width:1.00px;height:17.50px;background:#e4e4e4;"></div>
<div class="a" style="left:305.20px;top:275.50px;width:1.00px;height:633.50px;background:#dedede;"></div>
<div class="a" style="left:305.20px;top:258.00px;width:1.00px;height:17.50px;background:#e4e4e4;"></div>
<div class="a" style="left:388.40px;top:275.50px;width:1.00px;height:633.50px;background:#dedede;"></div>
<div class="a" style="left:388.40px;top:258.00px;width:1.00px;height:17.50px;background:#e4e4e4;"></div>
<div class="a" style="left:471.60px;top:275.50px;width:1.00px;height:633.50px;background:#dedede;"></div>
<div class="a" style="left:471.60px;top:258.00px;width:1.00px;height:17.50px;background:#e4e4e4;"></div>
<div class="a" style="left:554.80px;top:275.50px;width:1.00px;height:633.50px;background:#dedede;"></div>
<div class="a" style="left:554.80px;top:258.00px;width:1.00px;height:17.50px;background:#e4e4e4;"></div>
<div class="a" style="left:638.00px;top:275.50px;width:1.00px;height:633.50px;background:#dedede;"></div>
<div class="a" style="left:638.00px;top:258.00px;width:1.00px;height:17.50px;background:#e4e4e4;"></div>
<div class="a" style="left:721.20px;top:275.50px;width:1.00px;height:633.50px;background:#dedede;"></div>
<div class="a" style="left:721.20px;top:258.00px;width:1.00px;height:17.50px;background:#e4e4e4;"></div>
<div class="a" style="left:804.40px;top:275.50px;width:1.00px;height:633.50px;background:#dedede;"></div>
<div class="a" style="left:804.40px;top:258.00px;width:1.00px;height:17.50px;background:#e4e4e4;"></div>
<div class="a" style="left:887.60px;top:275.50px;width:1.00px;height:633.50px;background:#dedede;"></div>
<div class="a" style="left:887.60px;top:258.00px;width:1.00px;height:17.50px;background:#e4e4e4;"></div>
<div class="a" style="left:970.80px;top:275.50px;width:1.00px;height:633.50px;background:#dedede;"></div>
<div class="a" style="left:970.80px;top:258.00px;width:1.00px;height:17.50px;background:#e4e4e4;"></div>
<div class="a" style="left:1054.00px;top:275.50px;width:1.00px;height:633.50px;background:#dedede;"></div>
<div class="a" style="left:1054.00px;top:258.00px;width:1.00px;height:17.50px;background:#e4e4e4;"></div>
<div class="a" style="left:1137.20px;top:275.50px;width:1.00px;height:633.50px;background:#dedede;"></div>
<div class="a" style="left:1137.20px;top:258.00px;width:1.00px;height:17.50px;background:#e4e4e4;"></div>
<div class="a" style="left:0.00px;top:275.00px;width:27.00px;height:1.00px;background:#dcdcdc;"></div>
<div class="a" style="left:173.00px;top:275.00px;width:1040.00px;height:1.00px;background:#c2c2c2;"></div>
<div class="a" style="left:26.50px;top:275.50px;width:1.00px;height:633.50px;background:#a9a9a9;"></div>
<div class="a" style="left:1212.00px;top:275.00px;width:1.00px;height:634.00px;background:#b9b9b9;"></div>
<div class="a" style="left:0.00px;top:257.50px;width:26.50px;height:18.00px;background:#fff;"></div>
<svg class="a" style="left:11.60px;top:260.00px;" width="13.2" height="13" viewBox="0 0 13.2 13"><path d="M13 0.4V12.8H0.4Z" fill="#d6d6d6"/></svg>
<div class="a" style="left:27.00px;top:257.00px;width:146.00px;height:17.50px;background:#e1e1e1;"></div>
<svg class="a" style="left:27.00px;top:273.00px;" width="146" height="4" viewBox="0 0 146 4"><rect x="0" y="1.2" width="146.5" height="1.7" fill="#217346"/></svg>
<div class="a" style="left:0.00px;top:313.88px;width:26.00px;height:18.69px;background:#e1e1e1;"></div>
<div class="a" style="left:25.50px;top:313.38px;width:1.50px;height:20.19px;background:#217346;"></div>
<div class="a" style="left:28.00px;top:313.38px;width:278.20px;height:19.19px;background:#ddebf7;"></div>
<div class="a" style="left:28.00px;top:331.86px;width:278.20px;height:1.00px;background:#c9dff2;"></div>
<div class="a" style="left:28.00px;top:332.76px;width:277.20px;height:57.56px;background:#fff;"></div>
<div class="a" style="left:28.00px;top:390.12px;width:278.20px;height:19.79px;background:#ddebf7;"></div>
<div class="a" style="left:28.00px;top:390.12px;width:278.20px;height:1.00px;background:#a3c7e9;"></div>
<span class="a t" style="top:258px;font-size:13.5px;line-height:17px;color:#217346;left:100.00px;transform:translateX(-50%);font-weight:700;"><span>A</span></span>
<span class="a t" style="top:258px;font-size:13.5px;line-height:17px;color:#555;left:239.30px;transform:translateX(-50%);"><span>B</span></span>
<span class="a t" style="top:258px;font-size:13.5px;line-height:17px;color:#555;left:346.80px;transform:translateX(-50%);"><span>C</span></span>
<span class="a t" style="top:258px;font-size:13.5px;line-height:17px;color:#555;left:430.05px;transform:translateX(-50%);"><span>D</span></span>
<span class="a t" style="top:258px;font-size:13.5px;line-height:17px;color:#555;left:513.30px;transform:translateX(-50%);"><span>E</span></span>
<span class="a t" style="top:258px;font-size:13.5px;line-height:17px;color:#555;left:596.55px;transform:translateX(-50%);"><span>F</span></span>
<span class="a t" style="top:258px;font-size:13.5px;line-height:17px;color:#555;left:679.80px;transform:translateX(-50%);"><span>G</span></span>
<span class="a t" style="top:258px;font-size:13.5px;line-height:17px;color:#555;left:763.05px;transform:translateX(-50%);"><span>H</span></span>
<span class="a t" style="top:258px;font-size:13.5px;line-height:17px;color:#555;left:846.30px;transform:translateX(-50%);"><span>I</span></span>
<span class="a t" style="top:258px;font-size:13.5px;line-height:17px;color:#555;left:929.55px;transform:translateX(-50%);"><span>J</span></span>
<span class="a t" style="top:258px;font-size:13.5px;line-height:17px;color:#555;left:1012.80px;transform:translateX(-50%);"><span>K</span></span>
<span class="a t" style="top:258px;font-size:13.5px;line-height:17px;color:#555;left:1096.05px;transform:translateX(-50%);"><span>L</span></span>
<span class="a t" style="top:258px;font-size:13.5px;line-height:17px;color:#555;left:1179.30px;transform:translateX(-50%);"><span>M</span></span>
<span class="a t" style="top:277px;font-size:13.8px;line-height:17px;color:#4a4a4a;left:13.60px;transform:translateX(-50%);letter-spacing:-0.5px;"><span>1</span></span>
<span class="a t" style="top:296px;font-size:13.8px;line-height:17px;color:#4a4a4a;left:13.60px;transform:translateX(-50%);letter-spacing:-0.5px;"><span>2</span></span>
<span class="a t" style="top:315px;font-size:13.6px;line-height:17px;color:#217346;left:13.60px;transform:translateX(-50%);font-weight:700;"><span>3</span></span>
<span class="a t" style="top:335px;font-size:13.8px;line-height:17px;color:#4a4a4a;left:13.60px;transform:translateX(-50%);letter-spacing:-0.5px;"><span>4</span></span>
<span class="a t" style="top:354px;font-size:13.8px;line-height:17px;color:#4a4a4a;left:13.60px;transform:translateX(-50%);letter-spacing:-0.5px;"><span>5</span></span>
<span class="a t" style="top:373px;font-size:13.8px;line-height:17px;color:#4a4a4a;left:13.60px;transform:translateX(-50%);letter-spacing:-0.5px;"><span>6</span></span>
<span class="a t" style="top:392px;font-size:13.8px;line-height:17px;color:#4a4a4a;left:13.60px;transform:translateX(-50%);letter-spacing:-0.5px;"><span>7</span></span>
<span class="a t" style="top:411px;font-size:13.8px;line-height:17px;color:#4a4a4a;left:13.60px;transform:translateX(-50%);letter-spacing:-0.5px;"><span>8</span></span>
<span class="a t" style="top:430px;font-size:13.8px;line-height:17px;color:#4a4a4a;left:13.60px;transform:translateX(-50%);letter-spacing:-0.5px;"><span>9</span></span>
<span class="a t" style="top:450px;font-size:13.8px;line-height:17px;color:#4a4a4a;left:13.60px;transform:translateX(-50%);letter-spacing:-0.5px;"><span>10</span></span>
<span class="a t" style="top:469px;font-size:13.8px;line-height:17px;color:#4a4a4a;left:13.60px;transform:translateX(-50%);letter-spacing:-0.5px;"><span>11</span></span>
<span class="a t" style="top:488px;font-size:13.8px;line-height:17px;color:#4a4a4a;left:13.60px;transform:translateX(-50%);letter-spacing:-0.5px;"><span>12</span></span>
<span class="a t" style="top:507px;font-size:13.8px;line-height:17px;color:#4a4a4a;left:13.60px;transform:translateX(-50%);letter-spacing:-0.5px;"><span>13</span></span>
<span class="a t" style="top:526px;font-size:13.8px;line-height:17px;color:#4a4a4a;left:13.60px;transform:translateX(-50%);letter-spacing:-0.5px;"><span>14</span></span>
<span class="a t" style="top:546px;font-size:13.8px;line-height:17px;color:#4a4a4a;left:13.60px;transform:translateX(-50%);letter-spacing:-0.5px;"><span>15</span></span>
<span class="a t" style="top:565px;font-size:13.8px;line-height:17px;color:#4a4a4a;left:13.60px;transform:translateX(-50%);letter-spacing:-0.5px;"><span>16</span></span>
<span class="a t" style="top:584px;font-size:13.8px;line-height:17px;color:#4a4a4a;left:13.60px;transform:translateX(-50%);letter-spacing:-0.5px;"><span>17</span></span>
<span class="a t" style="top:603px;font-size:13.8px;line-height:17px;color:#4a4a4a;left:13.60px;transform:translateX(-50%);letter-spacing:-0.5px;"><span>18</span></span>
<span class="a t" style="top:622px;font-size:13.8px;line-height:17px;color:#4a4a4a;left:13.60px;transform:translateX(-50%);letter-spacing:-0.5px;"><span>19</span></span>
<span class="a t" style="top:642px;font-size:13.8px;line-height:17px;color:#4a4a4a;left:13.60px;transform:translateX(-50%);letter-spacing:-0.5px;"><span>20</span></span>
<span class="a t" style="top:661px;font-size:13.8px;line-height:17px;color:#4a4a4a;left:13.60px;transform:translateX(-50%);letter-spacing:-0.5px;"><span>21</span></span>
<span class="a t" style="top:680px;font-size:13.8px;line-height:17px;color:#4a4a4a;left:13.60px;transform:translateX(-50%);letter-spacing:-0.5px;"><span>22</span></span>
<span class="a t" style="top:699px;font-size:13.8px;line-height:17px;color:#4a4a4a;left:13.60px;transform:translateX(-50%);letter-spacing:-0.5px;"><span>23</span></span>
<span class="a t" style="top:718px;font-size:13.8px;line-height:17px;color:#4a4a4a;left:13.60px;transform:translateX(-50%);letter-spacing:-0.5px;"><span>24</span></span>
<span class="a t" style="top:737px;font-size:13.8px;line-height:17px;color:#4a4a4a;left:13.60px;transform:translateX(-50%);letter-spacing:-0.5px;"><span>25</span></span>
<span class="a t" style="top:757px;font-size:13.8px;line-height:17px;color:#4a4a4a;left:13.60px;transform:translateX(-50%);letter-spacing:-0.5px;"><span>26</span></span>
<span class="a t" style="top:776px;font-size:13.8px;line-height:17px;color:#4a4a4a;left:13.60px;transform:translateX(-50%);letter-spacing:-0.5px;"><span>27</span></span>
<span class="a t" style="top:795px;font-size:13.8px;line-height:17px;color:#4a4a4a;left:13.60px;transform:translateX(-50%);letter-spacing:-0.5px;"><span>28</span></span>
<span class="a t" style="top:814px;font-size:13.8px;line-height:17px;color:#4a4a4a;left:13.60px;transform:translateX(-50%);letter-spacing:-0.5px;"><span>29</span></span>
<span class="a t" style="top:833px;font-size:13.8px;line-height:17px;color:#4a4a4a;left:13.60px;transform:translateX(-50%);letter-spacing:-0.5px;"><span>30</span></span>
<span class="a t" style="top:853px;font-size:13.8px;line-height:17px;color:#4a4a4a;left:13.60px;transform:translateX(-50%);letter-spacing:-0.5px;"><span>31</span></span>
<span class="a t" style="top:872px;font-size:13.8px;line-height:17px;color:#4a4a4a;left:13.60px;transform:translateX(-50%);letter-spacing:-0.5px;"><span>32</span></span>
<span class="a t" style="top:891px;font-size:13.8px;line-height:17px;color:#4a4a4a;left:13.60px;transform:translateX(-50%);letter-spacing:-0.5px;"><span>33</span></span>
<span class="a t" style="top:317px;font-size:12.6px;line-height:16px;color:#000;left:29.90px;font-weight:700;transform:scaleX(0.9843);transform-origin:0 50%;"><span>Étiquettes de lignes</span></span>
<span class="a t" style="top:317px;font-size:12.6px;line-height:16px;color:#000;left:175.50px;font-weight:700;transform:scaleX(1.0205);transform-origin:0 50%;"><span>Somme de cpu_time</span></span>
<span class="a t" style="top:335px;font-size:12.8px;line-height:17px;color:#0c0c0c;left:29.90px;transform:scaleX(1.0447);transform-origin:0 50%;"><span>check-host-alive</span></span>
<span class="a t" style="top:354px;font-size:12.8px;line-height:17px;color:#0c0c0c;left:29.90px;transform:scaleX(1.0328);transform-origin:0 50%;"><span>dump-check-example-1</span></span>
<span class="a t" style="top:373px;font-size:12.8px;line-height:17px;color:#0c0c0c;left:29.90px;transform:scaleX(1.0328);transform-origin:0 50%;"><span>dump-check-example-2</span></span>
<span class="a t" style="top:393px;font-size:12.6px;line-height:16px;color:#000;left:29.90px;font-weight:700;transform:scaleX(1.0148);transform-origin:0 50%;"><span>Total général</span></span>
<span class="a t" style="top:335px;font-size:12.8px;line-height:17px;color:#0c0c0c;left:270.50px;"><span>0,309</span></span>
<span class="a t" style="top:354px;font-size:12.8px;line-height:17px;color:#0c0c0c;left:270.50px;"><span>10,04</span></span>
<span class="a t" style="top:373px;font-size:12.8px;line-height:17px;color:#0c0c0c;left:263.50px;transform:scaleX(0.9964);transform-origin:0 50%;"><span>69,698</span></span>
<span class="a t" style="top:393px;font-size:12.6px;line-height:16px;color:#000;left:263.00px;font-weight:700;transform:scaleX(1.0251);transform-origin:0 50%;"><span>80,047</span></span>
<svg class="a" style="left:26.00px;top:312.38px;" width="149" height="22" viewBox="0 0 149 22"><rect x="1.3" y="1.20" width="146" height="19.59" fill="none" stroke="#217346" stroke-width="1.7"/></svg>
<div class="a" style="left:170.20px;top:330.26px;width:5.40px;height:5.40px;background:#217346;border:1px solid #fff;"></div>
<div class="a" style="left:155.50px;top:316.38px;width:15.50px;height:14.50px;background:#f6f6f6;border:1px solid #a0a0a0;"></div>
<svg class="a" style="left:160.50px;top:322.18px;" width="6" height="4" viewBox="0 0 6 4"><path d="M0 0H5.4L2.7 3Z" fill="#666"/></svg>
<div class="a" style="left:1213.00px;top:257.00px;width:19.00px;height:652.00px;background:#fff;"></div>
<div class="a" style="left:1215.50px;top:258.00px;width:14.50px;height:15.00px;background:#fff;border:1px solid #c3c3c3;"></div>
<svg class="a" style="left:1218.80px;top:263.60px;" width="8" height="5" viewBox="0 0 8 5"><path d="M0 4.4H7.8L3.9 0Z" fill="#777"/></svg>
<div class="a" style="left:1215.50px;top:273.00px;width:14.50px;height:602.50px;background:#fff;border:1px solid #c3c3c3;"></div>
<div class="a" style="left:1215.50px;top:875.50px;width:14.50px;height:19.00px;background:#f1f1f1;"></div>
<div class="a" style="left:1215.50px;top:894.50px;width:14.50px;height:14.50px;background:#fff;border:1px solid #c3c3c3;"></div>
<svg class="a" style="left:1218.80px;top:899.60px;" width="8" height="5" viewBox="0 0 8 5"><path d="M0 0H7.8L3.9 4.4Z" fill="#777"/></svg>
<div class="a" style="left:0.00px;top:909.00px;width:1233.00px;height:23.60px;background:#f4f4f4;"></div>
<div class="a" style="left:0.00px;top:909.00px;width:1213.00px;height:1.00px;background:#b0b0b0;"></div>
<svg class="a" style="left:22.20px;top:917.50px;" width="5" height="8" viewBox="0 0 5 8"><path d="M4.4 0.2V7.2L0.3 3.7Z" fill="#c6c6c6"/></svg>
<svg class="a" style="left:45.00px;top:917.50px;" width="5" height="8" viewBox="0 0 5 8"><path d="M0.3 0.2V7.2L4.4 3.7Z" fill="#c6c6c6"/></svg>
<div class="a" style="left:82.00px;top:909.00px;width:58.60px;height:21.20px;background:#fff;border:1px solid #b0b0b0;border-top:none;border-bottom:none;"></div>
<div class="a" style="left:82.00px;top:928.60px;width:58.60px;height:1.80px;background:#2c7a50;"></div>
<span class="a t" style="top:910px;font-size:13.4px;line-height:17px;color:#217346;left:92.40px;font-weight:700;transform:scaleX(0.9715);transform-origin:0 50%;"><span>Feuil3</span></span>
<span class="a t" style="top:910px;font-size:13.6px;line-height:17px;color:#555;left:151.40px;transform:scaleX(0.9343);transform-origin:0 50%;"><span>Feuil2</span></span>
<div class="a" style="left:197.20px;top:912.50px;width:1.00px;height:16.70px;background:#b5b5b5;"></div>
<span class="a t" style="top:910px;font-size:13.6px;line-height:17px;color:#555;left:209.00px;transform:scaleX(0.9181);transform-origin:0 50%;"><span>Feuil1</span></span>
<div class="a" style="left:254.00px;top:912.50px;width:1.00px;height:16.70px;background:#b5b5b5;"></div>
<svg class="a" style="left:280.80px;top:912.80px;" width="17" height="17" viewBox="0 0 17 17"><circle cx="8.5" cy="8.5" r="7.6" fill="#f4f4f4" stroke="#767676" stroke-width="1.1"/><path d="M4.6 8.5h7.8M8.5 4.6v7.8" stroke="#767676" stroke-width="1.2"/></svg>
<div class="a" style="left:737.60px;top:916.00px;width:1.20px;height:1.20px;background:#a5a5a5;"></div>
<div class="a" style="left:737.60px;top:920.00px;width:1.20px;height:1.20px;background:#a5a5a5;"></div>
<div class="a" style="left:737.60px;top:924.00px;width:1.20px;height:1.20px;background:#a5a5a5;"></div>
<div class="a" style="left:752.50px;top:913.50px;width:14.00px;height:14.50px;background:#fff;border:1px solid #c3c3c3;"></div>
<svg class="a" style="left:757.50px;top:917.50px;" width="4" height="7" viewBox="0 0 4 7"><path d="M3.8 0V6.6L0.2 3.3Z" fill="#555"/></svg>
<div class="a" style="left:766.50px;top:913.50px;width:394.50px;height:14.50px;background:#fff;border:1px solid #c3c3c3;"></div>
<div class="a" style="left:1161.00px;top:914.00px;width:37.00px;height:14.00px;background:#e8e8e8;"></div>
<div class="a" style="left:1198.00px;top:913.50px;width:14.00px;height:14.50px;background:#fff;border:1px solid #c3c3c3;"></div>
<svg class="a" style="left:1203.50px;top:917.50px;" width="4" height="7" viewBox="0 0 4 7"><path d="M0.2 0V6.6L3.8 3.3Z" fill="#555"/></svg>
<div class="a" style="left:0.00px;top:932.60px;width:1562.00px;height:22.40px;background:#217346;"></div>
<span class="a t" style="top:937px;font-size:10.2px;line-height:13px;color:#fff;left:5.60px;transform:scaleX(0.8428);transform-origin:0 50%;"><span>PRÊT</span></span>
<div class="a" style="left:0.00px;top:954.00px;width:1562.00px;height:1.00px;background:#708c7c;"></div>
<div class="a" style="left:1278.00px;top:932.60px;width:33.00px;height:22.40px;background:#0e6537;"></div>
<svg class="a" style="left:1287.50px;top:937.50px;" width="12" height="11" viewBox="0 0 12 11"><rect x="0.5" y="0.5" width="10.6" height="9.6" fill="none" stroke="#fff"/><path d="M0.5 3.7h10.6M0.5 6.9h10.6M4 0.5v9.6M7.6 0.5v9.6" stroke="#fff" stroke-width="0.9"/></svg>
<svg class="a" style="left:1321.50px;top:937.50px;" width="12" height="11" viewBox="0 0 12 11"><rect x="0.5" y="0.5" width="10.6" height="9.6" fill="none" stroke="#fff"/><rect x="3" y="2.8" width="5.6" height="5" fill="none" stroke="#fff" stroke-width="0.9"/><path d="M4.4 4.6h2.8M4.4 6.2h2.8" stroke="#fff" stroke-width="0.7"/></svg>
<svg class="a" style="left:1353.50px;top:937.50px;" width="12" height="11" viewBox="0 0 12 11"><rect x="0.5" y="0.5" width="10.6" height="9.6" fill="none" stroke="#fff"/><path d="M3.2 0.5V5.6H5.8V0.5M8.2 0.5v4" fill="none" stroke="#fff" stroke-width="1.1"/><rect x="3.2" y="0.5" width="2.6" height="5" fill="#fff"/></svg>
<div class="a" style="left:1380.30px;top:942.30px;width:7.50px;height:2.20px;background:#fff;"></div>
<div class="a" style="left:1390.50px;top:943.00px;width:100.00px;height:1.00px;background:#e6efe9;"></div>
<div class="a" style="left:1439.60px;top:937.60px;width:3.00px;height:11.50px;background:#fff;"></div>
<div class="a" style="left:1494.30px;top:942.30px;width:9.40px;height:2.20px;background:#fff;"></div>
<div class="a" style="left:1497.90px;top:938.70px;width:2.20px;height:9.40px;background:#fff;"></div>
<span class="a t" style="top:937px;font-size:10.2px;line-height:13px;color:#fff;left:1517.00px;transform:scaleX(0.9865);transform-origin:0 50%;"><span>100 %</span></span>
<div class="a" style="left:471.00px;top:350.00px;width:420.00px;height:330.30px;background:#f0f0f0;border:1px solid #4a4a4a;border-right-color:#b4b4b4;border-bottom-color:#c4c4c4;box-shadow:0 5px 14px rgba(0,0,0,0.32),0 0 3px rgba(0,0,0,0.14);"></div>
<div class="a" style="left:472.00px;top:351.00px;width:418.00px;height:30.00px;background:#fff;"></div>
<div class="a" style="left:890.00px;top:350.00px;width:1.00px;height:31.00px;background:#4a4a4a;"></div>
<span class="a t" style="top:358px;font-size:12px;line-height:16px;color:#000;left:480.20px;transform:scaleX(0.9578);transform-origin:0 50%;"><span>Paramètres des champs de valeurs</span></span>
<span class="a t" style="top:357px;font-size:13px;line-height:17px;color:#000;left:822.00px;transform:translateX(-50%);"><span>?</span></span>
<svg class="a" style="left:861.70px;top:360.00px;" width="11" height="11" viewBox="0 0 11 11"><path d="M0.3 0.3L10.5 10.3M10.5 0.3L0.3 10.3" stroke="#111" stroke-width="1.1"/></svg>
<span class="a t" style="top:389px;font-size:11px;line-height:14px;color:#1a1a1a;left:479.50px;transform:scaleX(0.9694);transform-origin:0 50%;"><span>Nom de la source :</span></span>
<span class="a t" style="top:389px;font-size:11px;line-height:14px;color:#1a1a1a;left:580.20px;transform:scaleX(0.9005);transform-origin:0 50%;"><span>cpu_time</span></span>
<span class="a t" style="top:414px;font-size:11px;line-height:14px;color:#1a1a1a;left:479.50px;transform:scaleX(0.9591);transform-origin:0 50%;"><span><u>N</u>om personnalisé :</span></span>
<div class="a" style="left:581.30px;top:410.50px;width:302.50px;height:20.60px;background:#fff;border:1px solid #c3c7cb;"></div>
<div class="a" style="left:584.00px;top:413.30px;width:94.20px;height:13.20px;background:#99c9ef;"></div>
<span class="a t" style="top:413px;font-size:11px;line-height:14px;color:#1a1a1a;left:584.60px;transform:scaleX(0.9258);transform-origin:0 50%;"><span>Somme de cpu_time</span></span>
<div class="a" style="left:479.50px;top:462.00px;width:402.20px;height:168.00px;background:#fff;border:1px solid #dcdcdc;"></div>
<div class="a" style="left:617.50px;top:442.20px;width:106.40px;height:20.30px;background:#f0f0f0;border:1px solid #dcdcdc;border-bottom:none;"></div>
<span class="a t" style="top:446px;font-size:11px;line-height:14px;color:#1a1a1a;left:626.30px;transform:scaleX(0.9392);transform-origin:0 50%;"><span>Afficher les valeurs</span></span>
<div class="a" style="left:479.50px;top:440.60px;width:139.00px;height:22.60px;background:#fff;border:1px solid #dcdcdc;border-bottom:none;"></div>
<span class="a t" style="top:445px;font-size:11px;line-height:14px;color:#1a1a1a;left:489.60px;transform:scaleX(0.9328);transform-origin:0 50%;"><span>Synthèse des valeurs par</span></span>
<span class="a t" style="top:472px;font-size:11px;line-height:14px;color:#000;left:490.80px;font-weight:700;transform:scaleX(0.9329);transform-origin:0 50%;"><span>Ré<u>s</u>umer le champ de valeur par</span></span>
<div class="a" style="left:490.80px;top:489.20px;width:382.00px;height:1.00px;background:#dcdcdc;"></div>
<span class="a t" style="top:494px;font-size:11px;line-height:14px;color:#1a1a1a;left:490.80px;transform:scaleX(0.9489);transform-origin:0 50%;"><span>Choisissez le type de calcul que vous souhaitez utiliser pour résumer</span></span>
<span class="a t" style="top:511px;font-size:11px;line-height:14px;color:#1a1a1a;left:490.80px;transform:scaleX(0.9469);transform-origin:0 50%;"><span>données du champ sélectionné</span></span>
<div class="a" style="left:490.50px;top:527.20px;width:251.20px;height:84.50px;background:#fff;border:1px solid #828790;"></div>
<div class="a" style="left:492.20px;top:528.80px;width:231.00px;height:13.50px;background:#0078d7;"></div>
<span class="a t" style="top:529px;font-size:11px;line-height:14px;color:#fff;left:494.20px;transform:scaleX(0.9312);transform-origin:0 50%;"><span>Somme</span></span>
<span class="a t" style="top:543px;font-size:11px;line-height:14px;color:#1a1a1a;left:494.20px;"><span>Nombre</span></span>
<span class="a t" style="top:556px;font-size:11px;line-height:14px;color:#1a1a1a;left:494.20px;transform:scaleX(0.9522);transform-origin:0 50%;"><span>Moyenne</span></span>
<span class="a t" style="top:570px;font-size:11px;line-height:14px;color:#1a1a1a;left:494.20px;transform:scaleX(0.9817);transform-origin:0 50%;"><span>Max</span></span>
<span class="a t" style="top:583px;font-size:11px;line-height:14px;color:#1a1a1a;left:494.20px;transform:scaleX(0.9755);transform-origin:0 50%;"><span>Min</span></span>
<span class="a t" style="top:597px;font-size:11px;line-height:14px;color:#1a1a1a;left:494.20px;transform:scaleX(0.9610);transform-origin:0 50%;"><span>Produit</span></span>
<div class="a" style="left:724.00px;top:528.20px;width:16.60px;height:82.50px;background:#f0f0f0;"></div>
<div class="a" style="left:724.00px;top:546.00px;width:15.20px;height:26.00px;background:#cdcdcd;"></div>
<svg class="a" style="left:727.60px;top:534.00px;" width="8" height="6" viewBox="0 0 8 6"><path d="M0.5 5L4 1.4L7.5 5" fill="none" stroke="#555" stroke-width="1.3"/></svg>
<svg class="a" style="left:727.60px;top:599.00px;" width="8" height="6" viewBox="0 0 8 6"><path d="M0.5 1L4 4.6L7.5 1" fill="none" stroke="#555" stroke-width="1.3"/></svg>
<div class="a" style="left:479.10px;top:649.00px;width:108.80px;height:23.00px;background:#e1e1e1;border:1px solid #adadad;"></div>
<span class="a t" style="top:654px;font-size:11px;line-height:14px;color:#1a1a1a;left:489.60px;transform:scaleX(0.9691);transform-origin:0 50%;"><span><u>F</u>ormat de nombre</span></span>
<div class="a" style="left:692.00px;top:649.00px;width:89.20px;height:23.00px;background:#e1e1e1;border:2px solid #0078d7;"></div>
<span class="a t" style="top:654px;font-size:11px;line-height:14px;color:#1a1a1a;left:729.60px;transform:scaleX(0.8864);transform-origin:0 50%;"><span>OK</span></span>
<div class="a" style="left:793.10px;top:649.00px;width:90.00px;height:23.00px;background:#e1e1e1;border:1px solid #adadad;"></div>
<span class="a t" style="top:654px;font-size:11px;line-height:14px;color:#1a1a1a;left:820.60px;transform:scaleX(0.9282);transform-origin:0 50%;"><span>Annuler</span></span>
<svg class="a" style="left:881.00px;top:670.00px;" width="9" height="9" viewBox="0 0 9 9"><path d="M8.5 0.5L0.5 8.5M8.5 3.5L3.5 8.5M8.5 6.5L6.5 8.5" stroke="#b5b5b5" stroke-width="1"/></svg>
<div class="a" style="left:691.00px;top:520.80px;width:29.20px;height:29.20px;background:#8b0000;border-radius:50%;box-shadow:0 0 1.5px rgba(255,255,255,0.8);"></div>
<span class="a t" style="top:525px;font-size:16.5px;line-height:20px;color:#fff;left:705.60px;transform:translateX(-50%);"><span>2</span></span>
<div class="a" style="left:748.80px;top:647.70px;width:29.20px;height:29.20px;background:#8b0000;border-radius:50%;box-shadow:0 0 1.5px rgba(255,255,255,0.8);"></div>
<span class="a t" style="top:652px;font-size:16.5px;line-height:20px;color:#fff;left:763.40px;transform:translateX(-50%);"><span>3</span></span>
<div class="a" style="left:1231.50px;top:257.00px;width:330.50px;height:675.60px;background:#fff;"></div>
<div class="a" style="left:1233.20px;top:258.00px;width:1.00px;height:674.00px;background:#e3e3e3;"></div>
<span class="a t" style="top:268px;font-size:20.6px;line-height:25px;color:#36865d;left:1244.90px;transform:scaleX(0.9945);transform-origin:0 50%;"><span>Champs de tableau croisé d...</span></span>
<svg class="a" style="left:1524.50px;top:273.50px;" width="9" height="5" viewBox="0 0 9 5"><path d="M0 0H8.6L4.3 4.4Z" fill="#666"/></svg>
<svg class="a" style="left:1541.40px;top:271.30px;" width="10" height="10" viewBox="0 0 10 10"><path d="M0.4 0.4L9.4 9.4M9.4 0.4L0.4 9.4" stroke="#666" stroke-width="1.4"/></svg>
<span class="a t" style="top:305px;font-size:11.6px;line-height:14px;color:#444;left:1243.00px;transform:scaleX(1.0041);transform-origin:0 50%;"><span>Choisissez les champs à inclure dans le rapport :</span></span>
<div class="a" style="left:1510.30px;top:299.30px;width:40.60px;height:24.60px;background:#fff;border:1px solid #c6c6c6;"></div>
<svg class="a" style="left:1518.30px;top:304.00px;" width="14" height="14" viewBox="0 0 14 14"><g transform="translate(7,7)"><rect x="-1.6" y="-6.8" width="3.2" height="4" fill="#8a8a8a" transform="rotate(0)"/><rect x="-1.6" y="-6.8" width="3.2" height="4" fill="#8a8a8a" transform="rotate(60)"/><rect x="-1.6" y="-6.8" width="3.2" height="4" fill="#8a8a8a" transform="rotate(120)"/><rect x="-1.6" y="-6.8" width="3.2" height="4" fill="#8a8a8a" transform="rotate(180)"/><rect x="-1.6" y="-6.8" width="3.2" height="4" fill="#8a8a8a" transform="rotate(240)"/><rect x="-1.6" y="-6.8" width="3.2" height="4" fill="#8a8a8a" transform="rotate(300)"/><circle r="4.9" fill="#8a8a8a"/><circle r="2.3" fill="#fff"/></g></svg>
<svg class="a" style="left:1539.70px;top:308.80px;" width="8" height="4.5" viewBox="0 0 8 4.5"><path d="M0 0H7.4L3.7 3.9Z" fill="#666"/></svg>
<div class="a" style="left:1243.00px;top:335.00px;width:308.00px;height:259.60px;background:#fcfcfc;"></div>
<div class="a" style="left:1244.00px;top:336.20px;width:12.80px;height:12.80px;background:#fff;border:1px solid #b3b3b3;"></div>
<span class="a t" style="top:337px;font-size:11.6px;line-height:14px;color:#444;left:1260.90px;transform:scaleX(1.0082);transform-origin:0 50%;"><span>#host_uuid</span></span>
<div class="a" style="left:1244.00px;top:356.20px;width:12.80px;height:12.80px;background:#fff;border:1px solid #b3b3b3;"></div>
<span class="a t" style="top:357px;font-size:11.6px;line-height:14px;color:#444;left:1260.90px;transform:scaleX(0.9900);transform-origin:0 50%;"><span>host_name</span></span>
<div class="a" style="left:1244.00px;top:376.20px;width:12.80px;height:12.80px;background:#fff;border:1px solid #b3b3b3;"></div>
<span class="a t" style="top:377px;font-size:11.6px;line-height:14px;color:#444;left:1260.90px;transform:scaleX(0.9727);transform-origin:0 50%;"><span>host_name_anonymous_hash</span></span>
<div class="a" style="left:1244.00px;top:396.20px;width:12.80px;height:12.80px;background:#fff;border:1px solid #b3b3b3;"></div>
<span class="a t" style="top:397px;font-size:11.6px;line-height:14px;color:#444;left:1260.90px;transform:scaleX(0.9820);transform-origin:0 50%;"><span>check_uuid</span></span>
<div class="a" style="left:1244.00px;top:416.20px;width:12.80px;height:12.80px;background:#fff;border:1px solid #b3b3b3;"></div>
<span class="a t" style="top:417px;font-size:11.6px;line-height:14px;color:#444;left:1260.90px;transform:scaleX(0.9673);transform-origin:0 50%;"><span>check_name</span></span>
<div class="a" style="left:1244.00px;top:436.20px;width:12.80px;height:12.80px;background:#fff;border:1px solid #b3b3b3;"></div>
<span class="a t" style="top:437px;font-size:11.6px;line-height:14px;color:#444;left:1260.90px;transform:scaleX(0.9669);transform-origin:0 50%;"><span>check_name_anonymous_hash</span></span>
<div class="a" style="left:1244.00px;top:456.20px;width:12.80px;height:12.80px;background:#fff;border:1px solid #b3b3b3;"></div>
<svg class="a" style="left:1246.00px;top:458.90px;" width="9" height="8" viewBox="0 0 9 8"><path d="M0.8 4.2L3.4 6.9L8.2 0.8" fill="none" stroke="#555" stroke-width="1.2"/></svg>
<span class="a t" style="top:457px;font-size:11.6px;line-height:14px;color:#222;left:1260.90px;font-weight:700;transform:scaleX(1.0087);transform-origin:0 50%;"><span>command_name</span></span>
<div class="a" style="left:1244.00px;top:476.20px;width:12.80px;height:12.80px;background:#fff;border:1px solid #b3b3b3;"></div>
<span class="a t" style="top:477px;font-size:11.6px;line-height:14px;color:#444;left:1260.90px;transform:scaleX(0.9895);transform-origin:0 50%;"><span>command_name_anonymous_hash</span></span>
<div class="a" style="left:1244.00px;top:496.20px;width:12.80px;height:12.80px;background:#fff;border:1px solid #b3b3b3;"></div>
<span class="a t" style="top:497px;font-size:11.6px;line-height:14px;color:#444;left:1260.90px;transform:scaleX(1.0379);transform-origin:0 50%;"><span>realm</span></span>
<div class="a" style="left:1244.00px;top:516.20px;width:12.80px;height:12.80px;background:#fff;border:1px solid #b3b3b3;"></div>
<span class="a t" style="top:517px;font-size:11.6px;line-height:14px;color:#444;left:1260.90px;transform:scaleX(0.9821);transform-origin:0 50%;"><span>realm_anonymous_hash</span></span>
<div class="a" style="left:1244.00px;top:536.20px;width:12.80px;height:12.80px;background:#fff;border:1px solid #b3b3b3;"></div>
<span class="a t" style="top:537px;font-size:11.6px;line-height:14px;color:#444;left:1260.90px;transform:scaleX(0.9850);transform-origin:0 50%;"><span>check_interval</span></span>
<div class="a" style="left:1244.00px;top:556.20px;width:12.80px;height:12.80px;background:#fff;border:1px solid #b3b3b3;"></div>
<span class="a t" style="top:557px;font-size:11.6px;line-height:14px;color:#444;left:1260.90px;transform:scaleX(1.0117);transform-origin:0 50%;"><span>retry_interval</span></span>
<div class="a" style="left:1244.00px;top:576.20px;width:12.80px;height:12.80px;background:#fff;border:1px solid #b3b3b3;"></div>
<svg class="a" style="left:1246.00px;top:578.90px;" width="9" height="8" viewBox="0 0 9 8"><path d="M0.8 4.2L3.4 6.9L8.2 0.8" fill="none" stroke="#555" stroke-width="1.2"/></svg>
<span class="a t" style="top:577px;font-size:11.6px;line-height:14px;color:#222;left:1260.90px;font-weight:700;transform:scaleX(0.9901);transform-origin:0 50%;"><span>cpu_time</span></span>
<div class="a" style="left:1535.00px;top:336.00px;width:15.20px;height:258.00px;background:#f0f0f0;"></div>
<div class="a" style="left:1535.00px;top:337.00px;width:15.00px;height:14.50px;background:#fff;border:1px solid #c3c3c3;"></div>
<svg class="a" style="left:1538.80px;top:341.80px;" width="8" height="5" viewBox="0 0 8 5"><path d="M0 4.2H7.4L3.7 0Z" fill="#6a6a6a"/></svg>
<div class="a" style="left:1535.00px;top:351.50px;width:15.00px;height:181.50px;background:#fff;border:1px solid #c3c3c3;"></div>
<div class="a" style="left:1535.00px;top:578.20px;width:15.00px;height:15.50px;background:#fff;border:1px solid #c3c3c3;"></div>
<svg class="a" style="left:1538.80px;top:583.80px;" width="8" height="5" viewBox="0 0 8 5"><path d="M0 0H7.4L3.7 4.2Z" fill="#6a6a6a"/></svg>
<div class="a" style="left:1243.50px;top:608.00px;width:311.00px;height:1.00px;background:repeating-linear-gradient(90deg,#d2d2d2 0 1px,transparent 1px 2px);"></div>
<span class="a t" style="top:614px;font-size:11.6px;line-height:14px;color:#444;left:1245.70px;transform:scaleX(0.9882);transform-origin:0 50%;"><span>Faites glisser les champs dans les zones voulues</span></span>
<span class="a t" style="top:630px;font-size:11.6px;line-height:14px;color:#444;left:1245.70px;transform:scaleX(0.9788);transform-origin:0 50%;"><span>ci-dessous:</span></span>
<div class="a" style="left:1244.60px;top:678.80px;width:149.00px;height:92.00px;background:#fcfcfc;"></div>
<div class="a" style="left:1400.20px;top:678.80px;width:151.50px;height:92.00px;background:#fcfcfc;"></div>
<div class="a" style="left:1244.60px;top:772.30px;width:149.00px;height:112.00px;background:#fcfcfc;"></div>
<div class="a" style="left:1400.20px;top:772.30px;width:151.50px;height:112.00px;background:#fcfcfc;"></div>
<div class="a" style="left:1397.00px;top:658.00px;width:1.00px;height:226.50px;background:#ababab;"></div>
<div class="a" style="left:1244.60px;top:770.90px;width:307.20px;height:1.00px;background:#ababab;"></div>
<svg class="a" style="left:1248.20px;top:660.60px;" width="12" height="12" viewBox="0 0 12 12"><path d="M0 0H11.8L7.4 5V11.4H4.4V5Z" fill="#8c8c8c"/></svg>
<span class="a t" style="top:659px;font-size:11.8px;line-height:16px;color:#444;left:1266.60px;transform:scaleX(0.8438);transform-origin:0 50%;"><span>FILTRES</span></span>
<svg class="a" style="left:1405.00px;top:661.50px;" width="9" height="10" viewBox="0 0 9 10"><path d="M0 0H3.2V9.5H0Z" fill="#8c8c8c"/><path d="M4.2 0H6V9.5H4.2Z" fill="#a5a5a5"/><path d="M7 0H8.6V9.5H7Z" fill="#bdbdbd"/></svg>
<span class="a t" style="top:659px;font-size:11.8px;line-height:16px;color:#444;left:1421.40px;transform:scaleX(0.9151);transform-origin:0 50%;"><span>COLONNES</span></span>
<svg class="a" style="left:1249.20px;top:780.70px;" width="10" height="9" viewBox="0 0 10 9"><path d="M0 0H9.8V3H0Z" fill="#8c8c8c"/><path d="M0 4.2H9.8V6H0Z" fill="#a5a5a5"/><path d="M0 7.2H9.8V8.4H0Z" fill="#bdbdbd"/></svg>
<span class="a t" style="top:778px;font-size:11.8px;line-height:16px;color:#444;left:1266.60px;transform:scaleX(0.8687);transform-origin:0 50%;"><span>LIGNES</span></span>
<span class="a t" style="top:777px;font-size:13.5px;line-height:17px;color:#777;left:1404.60px;font-family:'Liberation Serif', serif;transform:scaleX(1.2724);transform-origin:0 50%;"><span>Σ</span></span>
<span class="a t" style="top:778px;font-size:11.8px;line-height:16px;color:#444;left:1421.90px;transform:scaleX(0.8874);transform-origin:0 50%;"><span>VALEURS</span></span>
<div class="a" style="left:1245.10px;top:799.20px;width:146.80px;height:20.50px;background:#fff;border:1px solid #ababab;"></div>
<span class="a t" style="top:802px;font-size:12.2px;line-height:16px;color:#333;left:1252.70px;transform:scaleX(0.9628);transform-origin:0 50%;"><span>command_name</span></span>
<svg class="a" style="left:1375.00px;top:807.00px;" width="8" height="4.5" viewBox="0 0 8 4.5"><path d="M0 0H7.6L3.8 4.2Z" fill="#111"/></svg>
<div class="a" style="left:1400.90px;top:799.20px;width:150.00px;height:20.50px;background:#fff;border:1px solid #ababab;"></div>
<span class="a t" style="top:802px;font-size:12.2px;line-height:16px;color:#333;left:1407.80px;transform:scaleX(0.9680);transform-origin:0 50%;"><span>Somme de cpu_time</span></span>
<svg class="a" style="left:1534.00px;top:807.00px;" width="8" height="4.5" viewBox="0 0 8 4.5"><path d="M0 0H7.6L3.8 4.2Z" fill="#111"/></svg>
<div class="a" style="left:1531.90px;top:815.00px;width:29.20px;height:29.20px;background:#8b0000;border-radius:50%;box-shadow:0 0 1.5px rgba(255,255,255,0.8);"></div>
<span class="a t" style="top:820px;font-size:16.5px;line-height:20px;color:#fff;left:1546.50px;transform:translateX(-50%);"><span>1</span></span>
<div class="a" style="left:1244.50px;top:906.50px;width:12.80px;height:12.80px;background:#fff;border:1px solid #ababab;"></div>
<span class="a t" style="top:905px;font-size:12px;line-height:16px;color:#444;left:1263.00px;transform:scaleX(0.9970);transform-origin:0 50%;"><span>Différer la mise à jour de la disp...</span></span>
<div class="a" style="left:1456.50px;top:900.50px;width:95.50px;height:24.00px;background:#fff;border:1px solid #e0e0e0;"></div>
<span class="a t" style="top:905px;font-size:11.8px;line-height:16px;color:#b3b3b3;left:1462.00px;transform:scaleX(0.8943);transform-origin:0 50%;"><span>METTRE À JOUR</span></span>
</body></html>
